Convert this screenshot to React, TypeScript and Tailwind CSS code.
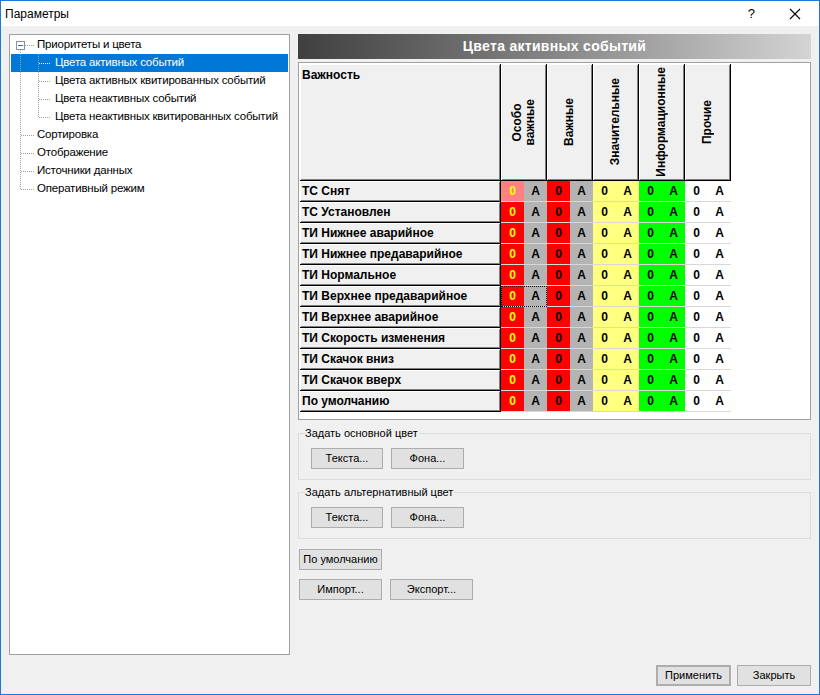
import React from 'react';

const rows = [
  'ТС Снят',
  'ТС Установлен',
  'ТИ Нижнее аварийное',
  'ТИ Нижнее предаварийное',
  'ТИ Нормальное',
  'ТИ Верхнее предаварийное',
  'ТИ Верхнее аварийное',
  'ТИ Скорость изменения',
  'ТИ Скачок вниз',
  'ТИ Скачок вверх',
  'По умолчанию',
];

const columns = [
  { title: 'Особо важные', o: 'bg-[#ff0000] text-[#ffff00]', a: 'bg-[#b4b4b4] text-black' },
  { title: 'Важные', o: 'bg-[#ff0000] text-black', a: 'bg-[#b4b4b4] text-black' },
  { title: 'Значительные', o: 'bg-[#ffff80] text-black', a: 'bg-[#ffff80] text-black' },
  { title: 'Информационные', o: 'bg-[#00ff00] text-black', a: 'bg-[#00ff00] text-black' },
  { title: 'Прочие', o: 'bg-white text-black', a: 'bg-white text-black' },
];

const treeItems = [
  { label: 'Приоритеты и цвета', level: 0 },
  { label: 'Цвета активных событий', level: 1, selected: true },
  { label: 'Цвета активных квитированных событий', level: 1 },
  { label: 'Цвета неактивных событий', level: 1 },
  { label: 'Цвета неактивных квитированных событий', level: 1 },
  { label: 'Сортировка', level: 0 },
  { label: 'Отображение', level: 0 },
  { label: 'Источники данных', level: 0 },
  { label: 'Оперативный режим', level: 0 },
];

function TreeLines() {
  // connector lines, local coords of tree padding box
  const rootY = [10, 100, 118, 136, 154];
  const childY = [28, 46, 64, 82];
  return (
    <svg className="absolute left-0 top-0 pointer-events-none" width="60" height="170">
      <g stroke="#a0a0a0" strokeWidth="1" strokeDasharray="1 1" shapeRendering="crispEdges">
        <line x1="10.5" y1="15" x2="10.5" y2="154" />
        <line x1="15" y1="10.5" x2="24" y2="10.5" />
        {rootY.slice(1).map((y) => (
          <line key={y} x1="11" y1={y + 0.5} x2="24" y2={y + 0.5} />
        ))}
        <line x1="28.5" y1="19" x2="28.5" y2="82" />
        {childY.map((y) => (
          <line key={y} x1="29" y1={y + 0.5} x2="41" y2={y + 0.5} stroke={y === 28 ? '#ffffff' : '#a0a0a0'} />
        ))}
      </g>
      <rect x="6.5" y="6.5" width="8" height="8" fill="#fff" stroke="#919191" shapeRendering="crispEdges" />
      <line x1="8" y1="10.5" x2="13" y2="10.5" stroke="#3a6ea5" shapeRendering="crispEdges" />
    </svg>
  );
}

function Btn({ children, className = '' }: { children: React.ReactNode; className?: string }) {
  return (
    <button
      className={`h-[21px] bg-[#e1e1e1] border border-[#adadad] text-[11px] text-black font-['Liberation_Sans',sans-serif] flex items-center justify-center whitespace-nowrap ${className}`}
    >
      {children}
    </button>
  );
}

function GroupBox({ title }: { title: string }) {
  return (
    <div className="relative h-[47px] border border-[#dcdcdc] mt-[6px]">
      <span className="absolute -top-[8px] left-[6px] bg-[#f0f0f0] pr-[1px] text-[11px] leading-[14px] text-black whitespace-nowrap">
        {title}
      </span>
      <div className="flex gap-[8px] pl-[12px] pt-[14px]">
        <Btn className="w-[72px]">Текста...</Btn>
        <Btn className="w-[73px]">Фона...</Btn>
      </div>
    </div>
  );
}

export default function App() {
  return (
    <div className="w-[820px] h-[695px] border border-[#1c7ad4] bg-[#f0f0f0] flex flex-col font-['Liberation_Sans',sans-serif] text-black overflow-hidden">
      {/* title bar */}
      <div className="h-[25px] bg-white flex items-center shrink-0">
        <span className="pl-[4px] text-[12px]">Параметры</span>
        <span className="ml-auto mr-[34px] text-[13px]">?</span>
        <svg width="12" height="12" viewBox="0 0 12 12" className="mr-[18px]">
          <path d="M1 1 L11 11 M11 1 L1 11" stroke="#000" strokeWidth="1.1" />
        </svg>
      </div>

      <div className="flex gap-[8px] pl-[8px] pt-[8px]">
        {/* tree */}
        <div className="relative w-[281px] h-[621px] bg-white border border-[#a0a0a0] p-[1px]">
          <TreeLines />
          {treeItems.map((it) => (
            <div
              key={it.label}
              className={`h-[18px] flex items-center text-[11.5px] tracking-[-0.2px] whitespace-nowrap ${
                it.selected ? 'bg-[#0078d7] text-white' : ''
              } ${it.level === 0 ? 'pl-[26px]' : 'pl-[44px]'}`}
            >
              {it.label}
            </div>
          ))}
        </div>

        {/* right panel */}
        <div className="w-[513px] flex flex-col">
          <div className="h-[25px] bg-gradient-to-r from-[#404040] to-[#d4d4d4] flex items-center justify-center">
            <span className="text-white font-bold text-[14px] tracking-[0.3px]">Цвета активных событий</span>
          </div>

          <div className="mt-[3px] h-[358px] bg-white border border-[#a0a0a0] p-[1px]">
            <div className="grid grid-cols-[201px_repeat(5,46px)] grid-rows-[117px_repeat(11,21px)] font-bold text-[12px]">
              <div className="bg-[#f0f0f0] border-r border-b border-black shadow-[inset_1px_1px_0_#fff,inset_-1px_-1px_0_#808080] px-[2px] pt-[2px]">
                Важность
              </div>
              {columns.map((c) => (
                <div
                  key={c.title}
                  className="bg-[#f0f0f0] border-r border-b border-black shadow-[inset_1px_1px_0_#fff,inset_-1px_-1px_0_#808080] flex items-center justify-center"
                >
                  <span className="[writing-mode:vertical-rl] rotate-180 text-center leading-[13px] whitespace-nowrap">
                    {c.title === 'Особо важные' ? (
                      <>
                        Особо
                        <br />
                        важные
                      </>
                    ) : (
                      c.title
                    )}
                  </span>
                </div>
              ))}
              {rows.map((r, ri) => (
                <React.Fragment key={r}>
                  <div className="bg-[#f0f0f0] border-r border-b border-black shadow-[inset_1px_1px_0_#fff,inset_-1px_-1px_0_#808080] px-[2px] flex items-center whitespace-nowrap">
                    {r}
                  </div>
                  {columns.map((c, ci) => (
                    <div
                      key={c.title}
                      className={`flex border-b border-[#d8d8d8] ${
                        ri === 5 && ci === 0 ? 'outline outline-1 outline-dotted outline-black -outline-offset-1' : ''
                      }`}
                    >
                      <div
                        className={`w-[23px] flex items-center justify-center ${
                          ri === 0 && ci === 0 ? 'bg-[#ff8080] text-[#ffff00]' : c.o
                        }`}
                      >
                        0
                      </div>
                      <div className={`w-[23px] flex items-center justify-center ${c.a}`}>A</div>
                    </div>
                  ))}
                </React.Fragment>
              ))}
            </div>
          </div>

          <div className="mt-[7px]">
            <GroupBox title="Задать основной цвет" />
            <div className="h-[6px]" />
            <GroupBox title="Задать альтернативный цвет" />
          </div>

          <div className="mt-[10px] flex flex-col gap-[9px] pl-[1px]">
            <Btn className="w-[83px]">По умолчанию</Btn>
            <div className="flex gap-[8px]">
              <Btn className="w-[83px]">Импорт...</Btn>
              <Btn className="w-[83px]">Экспорт...</Btn>
            </div>
          </div>
        </div>
      </div>

      <div className="mt-auto mb-[8px] flex justify-end gap-[6px] pr-[8px]">
        <Btn className="w-[75px] border-2 border-[#0078d7]">Применить</Btn>
        <Btn className="w-[74px]">Закрыть</Btn>
      </div>
    </div>
  );
}
